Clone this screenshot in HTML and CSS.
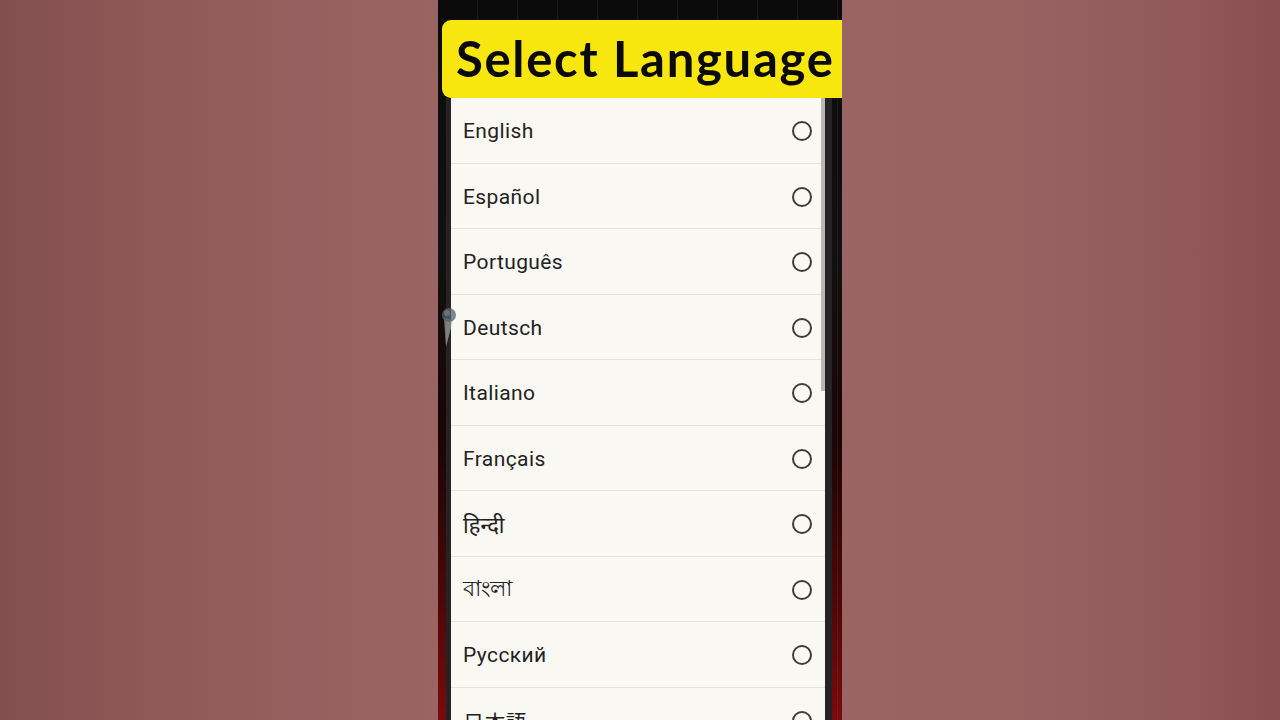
FILE: index.html
```html
<!DOCTYPE html>
<html lang="en">
<head>
<meta charset="utf-8">
<title>Select Language</title>
<link rel="stylesheet" href="styles.css">
</head>
<body>
<div class="stage">
  <div class="phone">
    <div class="banner"><span class="banner-text">Select Language</span></div>
    <div class="screen">
      <div class="bezel">
        <ul class="list">
          <li class="row"><span class="label">English</span><span class="radio"></span></li>
          <li class="row"><span class="label">Español</span><span class="radio"></span></li>
          <li class="row"><span class="label">Português</span><span class="radio"></span></li>
          <li class="row"><span class="label">Deutsch</span><span class="radio"></span></li>
          <li class="row"><span class="label">Italiano</span><span class="radio"></span></li>
          <li class="row"><span class="label">Français</span><span class="radio"></span></li>
          <li class="row"><span class="label indic">हिन्दी</span><span class="radio"></span></li>
          <li class="row"><span class="label indic">বাংলা</span><span class="radio"></span></li>
          <li class="row"><span class="label">Русский</span><span class="radio"></span></li>
          <li class="row"><span class="label cjk">日本語</span><span class="radio"></span></li>
        </ul>
        <div class="scrollbar"></div>
      </div>
    </div>
    <svg class="touch" width="18" height="44" viewBox="0 0 18 44">
      <path d="M3 14 L5 43 L12 16 Z" fill="#b9bcc0" opacity="0.6"/>
      <circle cx="8" cy="11" r="7" fill="#56606c" opacity="0.75"/>
      <circle cx="6" cy="9" r="3" fill="#8a939c" opacity="0.5"/>
    </svg>
  </div>
</div>
</body>
</html>
```

FILE: styles.css
```css
html, body {
  margin: 0;
  padding: 0;
  width: 1280px;
  height: 720px;
  overflow: hidden;
}

body {
  background: linear-gradient(to right,
    #834e4e 0%,
    #8f5958 12%,
    #966060 24%,
    #9a6463 34%,
    #9a6463 68%,
    #976161 82%,
    #905858 93%,
    #874f4f 100%);
}

.stage {
  display: flex;
  justify-content: center;
  height: 720px;
}

.phone {
  position: relative;
  width: 404px;
  height: 720px;
  display: flex;
  flex-direction: column;
  padding-top: 20px;
  box-sizing: border-box;
  overflow: hidden;
  background:
    repeating-linear-gradient(to right, transparent 0, transparent 39px, rgba(255,255,255,0.05) 39px, rgba(255,255,255,0.05) 40px),
    linear-gradient(to bottom, #0b0b0b 0%, #111111 35%, #1a0505 60%, #4a0708 82%, #7a0a0c 100%);
}

.banner {
  margin-left: 4px;
  width: 420px;
  height: 78px;
  flex: none;
  background: #f8e60f;
  border-radius: 9px 0 0 9px;
  display: flex;
  align-items: center;
  padding-left: 14px;
  box-sizing: border-box;
}

.banner-text {
  font-family: Lato, "Open Sans", sans-serif;
  font-weight: 700;
  font-size: 49px;
  color: #0a0a0a;
  letter-spacing: 1.7px;
  line-height: 1;
  padding-bottom: 2px;
}

.screen {
  flex: 1;
  display: flex;
  padding-left: 8px;
  padding-right: 10px;
  min-height: 0;
}

.bezel {
  position: relative;
  flex: 1;
  background: #242424;
  padding: 0 7px 0 5px;
  display: flex;
}

.list {
  list-style: none;
  margin: 0;
  padding: 0;
  flex: 1;
  background: #faf8f3;
}

.row {
  height: 65.5px;
  box-sizing: border-box;
  border-bottom: 1.5px solid #e7e3dc;
  display: flex;
  align-items: center;
  justify-content: space-between;
  padding: 2px 13px 0 12px;
}

.label {
  font-family: Roboto, "Noto Sans", "Noto Sans CJK JP", sans-serif;
  font-size: 21px;
  color: #222222;
  letter-spacing: 0.4px;
}

.indic {
  font-size: 22px;
  letter-spacing: 0;
}

.cjk {
  font-family: "Noto Sans CJK JP", sans-serif;
}

.radio {
  width: 16px;
  height: 16px;
  border: 2px solid #3d3d3d;
  border-radius: 50%;
  flex: none;
}

.scrollbar {
  position: absolute;
  top: 0;
  right: 7px;
  width: 4px;
  height: 293px;
  background: #b9b8b5;
}

.touch {
  position: absolute;
  left: 3px;
  top: 304px;
}
```
